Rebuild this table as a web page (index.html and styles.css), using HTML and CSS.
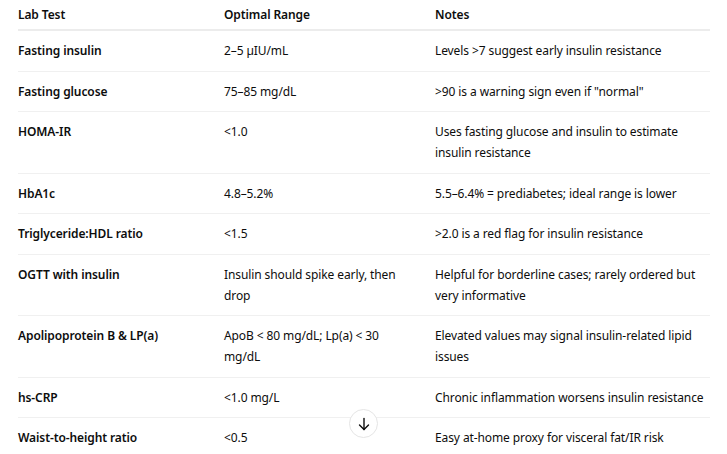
FILE: index.html
```html
<!DOCTYPE html>
<html lang="en">
<head>
<meta charset="utf-8">
<title>Lab tests</title>
<link rel="stylesheet" href="styles.css">
</head>
<body>
<div class="wrap">
  <table class="labs">
    <colgroup>
      <col class="c1"><col class="c2"><col class="c3">
    </colgroup>
    <thead>
      <tr><th>Lab Test</th><th>Optimal Range</th><th>Notes</th></tr>
    </thead>
    <tbody>
      <tr><td>Fasting insulin</td><td>2–5 µIU/mL</td><td>Levels &gt;7 suggest early insulin resistance</td></tr>
      <tr><td>Fasting glucose</td><td>75–85 mg/dL</td><td>&gt;90 is a warning sign even if "normal"</td></tr>
      <tr><td>HOMA-IR</td><td>&lt;1.0</td><td>Uses fasting glucose and insulin to estimate insulin resistance</td></tr>
      <tr><td>HbA1c</td><td>4.8–5.2%</td><td>5.5–6.4% = prediabetes; ideal range is lower</td></tr>
      <tr><td>Triglyceride:HDL ratio</td><td>&lt;1.5</td><td>&gt;2.0 is a red flag for insulin resistance</td></tr>
      <tr><td>OGTT with insulin</td><td>Insulin should spike early, then drop</td><td>Helpful for borderline cases; rarely ordered but very informative</td></tr>
      <tr><td>Apolipoprotein B &amp; LP(a)</td><td>ApoB &lt; 80 mg/dL; Lp(a) &lt; 30 mg/dL</td><td>Elevated values may signal insulin-related lipid issues</td></tr>
      <tr><td>hs-CRP</td><td>&lt;1.0 mg/L</td><td>Chronic inflammation worsens insulin resistance</td></tr>
      <tr><td>Waist-to-height ratio</td><td>&lt;0.5</td><td>Easy at-home proxy for visceral fat/IR risk</td></tr>
    </tbody>
  </table>
  <button class="scroll-down" aria-label="Scroll down">
    <svg width="16" height="16" viewBox="0 0 16 16" fill="none" stroke="#0d0d0d" stroke-width="1.4" stroke-linecap="round" stroke-linejoin="round">
      <path d="M8 2.5v11"/>
      <path d="M3.5 9l4.5 4.5L12.5 9"/>
    </svg>
  </button>
</div>
</body>
</html>
```

FILE: styles.css
```css
html, body {
  margin: 0;
  padding: 0;
  background: #ffffff;
}
body {
  font-family: "Noto Sans", "Open Sans", sans-serif;
  font-size: 12px;
  letter-spacing: -0.1px;
  color: #0d0d0d;
}
.wrap {
  position: relative;
  width: 727px;
  height: 454px;
  overflow: hidden;
}
.labs {
  margin-left: 18px;
  width: 692px;
  border-collapse: collapse;
  table-layout: fixed;
}
.c1 { width: 206px; }
.c2 { width: 211px; }
.c3 { width: 275px; }
.labs th,
.labs td {
  text-align: left;
  vertical-align: top;
  line-height: 21px;
  padding: 0 16px 0 0;
}
.labs th {
  font-weight: 600;
  padding-top: 4px;
  padding-bottom: 4px;
  border-bottom: 2px solid #ececec;
}
.labs td {
  padding-top: 9px;
  padding-bottom: 9.5px;
  border-bottom: 1px solid #f0f0f0;
}
.labs td:first-child {
  font-weight: 600;
}
.labs td:nth-child(2) {
  padding-right: 30px;
}
.labs td:last-child,
.labs th:last-child {
  padding-right: 0;
}
.labs tbody tr:last-child td {
  border-bottom: none;
}
.scroll-down {
  position: absolute;
  left: 349px;
  top: 409px;
  width: 29px;
  height: 29px;
  padding: 0;
  border: 1px solid #e5e5e5;
  border-radius: 50%;
  background: #ffffff;
  display: flex;
  align-items: center;
  justify-content: center;
}
```
